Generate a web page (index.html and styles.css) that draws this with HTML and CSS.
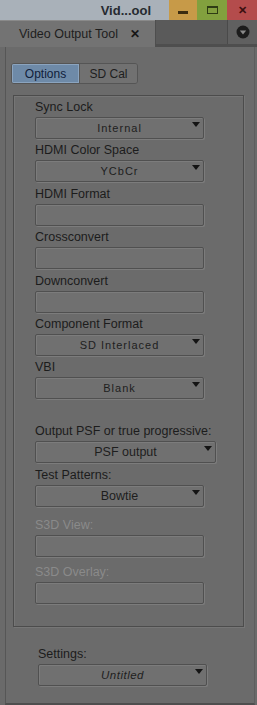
FILE: index.html
```html
<!DOCTYPE html>
<html>
	<head>
		<title>Video Output Tool</title>
		<link rel="stylesheet" href="styles.css">
	</head>
	<body>
		<div class="titlebar">
			<div class="title">Vid...ool</div>
			<div class="win-btn btn-min"><span class="min-bar"></span></div>
			<div class="win-btn btn-max"><span class="max-box"></span></div>
			<div class="win-btn btn-close">&#x2715;</div>
		</div>

		<div class="tabbar">
			<div class="tab">
				<span>Video Output Tool</span>
				<span class="tab-close">&#x2715;</span>
			</div>
			<div class="tab-fill"></div>
			<div class="tab-menu">
				<svg width="14" height="14" viewBox="0 0 14 14">
					<circle cx="7" cy="7" r="6.5" fill="#1c1c1c" />
					<path d="M3.8 5.6 L10.2 5.6 L7 9.4 Z" fill="#8a8a8a" />
				</svg>
			</div>
		</div>

		<div class="panel">
			<div class="segmented">
				<div class="seg seg-active">Options</div>
				<div class="seg">SD Cal</div>
			</div>

			<div class="group">
				<div class="field">
					<div class="field-label">Sync Lock</div>
					<div class="select mono">Internal<span class="arrow"></span></div>
				</div>
				<div class="field">
					<div class="field-label">HDMI Color Space</div>
					<div class="select mono">YCbCr<span class="arrow"></span></div>
				</div>
				<div class="field">
					<div class="field-label">HDMI Format</div>
					<div class="select"></div>
				</div>
				<div class="field">
					<div class="field-label">Crossconvert</div>
					<div class="select"></div>
				</div>
				<div class="field">
					<div class="field-label">Downconvert</div>
					<div class="select"></div>
				</div>
				<div class="field">
					<div class="field-label">Component Format</div>
					<div class="select mono">SD Interlaced<span class="arrow"></span></div>
				</div>
				<div class="field">
					<div class="field-label">VBI</div>
					<div class="select mono">Blank<span class="arrow"></span></div>
				</div>

				<div class="field field-gap">
					<div class="field-label">Output PSF or true progressive:</div>
					<div class="select select-wide">PSF output<span class="arrow"></span></div>
				</div>
				<div class="field">
					<div class="field-label">Test Patterns:</div>
					<div class="select">Bowtie<span class="arrow"></span></div>
				</div>
				<div class="field disabled s3d-view">
					<div class="field-label">S3D View:</div>
					<div class="select"></div>
				</div>
				<div class="field disabled">
					<div class="field-label">S3D Overlay:</div>
					<div class="select"></div>
				</div>
			</div>

			<div class="settings">
				<div class="field-label">Settings:</div>
				<div class="select select-italic">Untitled<span class="arrow"></span></div>
			</div>
		</div>
	</body>
</html>
```

FILE: styles.css
```css
* {
	margin: 0;
	padding: 0;
	box-sizing: border-box;
}

body {
	font-family: "Liberation Sans", Arial, sans-serif;
	background: #6a6a6a;
	color: #1c1c1c;
	width: 257px;
	height: 705px;
	overflow: hidden;
}

/* Window title bar */
.titlebar {
	display: flex;
	height: 20px;
}

.title {
	flex: 1;
	background: #a9b1b9;
	color: #262a30;
	font-weight: bold;
	font-size: 13px;
	text-align: right;
	padding: 3px 18px 0 0;
}

.win-btn {
	width: 29px;
	display: flex;
	align-items: center;
	justify-content: center;
}

.btn-min {
	width: 28px;
	background: #c79a48;
}

.min-bar {
	width: 10px;
	height: 3px;
	margin-top: 5px;
	background: #3c2c10;
}

.btn-max {
	width: 30px;
	background: #82a03e;
}

.max-box {
	width: 11px;
	height: 8px;
	border: 1px solid #2e3c14;
	border-top-width: 2px;
}

.btn-close {
	width: 30px;
	background: #b44c4c;
	color: #3a1010;
	font-size: 11px;
	font-weight: bold;
}

/* Tab strip */
.tabbar {
	display: flex;
	height: 27px;
	background: #4e4e4e;
}

.tab {
	width: 155px;
	background: #737373;
	border-top: 1px solid #8a8a8a;
	display: flex;
	align-items: center;
	gap: 12px;
	padding-left: 19px;
	font-size: 12.5px;
	color: #1e1e1e;
}

.tab-close {
	font-size: 12px;
	font-weight: bold;
	color: #161616;
}

.tab-fill {
	flex: 1;
	background: #5a5a5a;
	margin: 0 0 3px 1px;
}

.tab-menu {
	width: 30px;
	background: #606060;
	border-left: 1px solid #4a4a4a;
	margin-bottom: 3px;
	display: flex;
	align-items: center;
	justify-content: center;
}

/* Main panel */
.panel {
	height: 658px;
	margin-left: 5px;
	margin-right: 2px;
	border-left: 1px solid #565656;
	border-right: 1px solid #5e5e5e;
	border-bottom: 2px solid #4e4e4e;
	background: #6b6b6b;
	padding: 16px 0 0 5px;
}

.segmented {
	display: flex;
	width: 127px;
	height: 21px;
	border: 1px solid #555;
	border-radius: 3px;
	overflow: hidden;
	font-size: 12px;
}

.seg {
	flex: 1;
	display: flex;
	align-items: center;
	justify-content: center;
	background: #717171;
	color: #1e1e1e;
	border-left: 1px solid #575757;
}

.seg-active {
	flex: 0 0 67px;
	background: #6e8aa8;
	color: #10203a;
	border-left: none;
	box-shadow: inset 0 0 0 1px #8ba4bf;
}

.group {
	margin: 11px 0 0 2px;
	width: 231px;
	height: 532px;
	border: 1px solid #4c4c4c;
	box-shadow: inset 1px 1px 0 #767676, 1px 1px 0 #767676;
	padding: 4px 0 0 21px;
}

.field-label {
	font-size: 12.5px;
	height: 17px;
	line-height: 14px;
	color: #1c1c1c;
}

.select {
	position: relative;
	width: 169px;
	height: 22px;
	margin-bottom: 4.4px;
	background: #707070;
	border: 1px solid #505050;
	border-radius: 2px;
	box-shadow: inset 1px 1px 0 #7c7c7c, 1px 1px 0 #7c7c7c;
	font-size: 12.5px;
	line-height: 20px;
	text-align: center;
	color: #1e1e1e;
}

.mono {
	font-size: 11px;
	letter-spacing: 1px;
}

.select-wide {
	width: 181px;
}

.select-italic {
	font-style: italic;
	font-size: 11.5px;
	letter-spacing: 0.5px;
}

.arrow {
	position: absolute;
	top: 4px;
	right: 3px;
	width: 0;
	height: 0;
	border-left: 4px solid transparent;
	border-right: 4px solid transparent;
	border-top: 5px solid #141414;
}

.field-gap {
	margin-top: 25px;
}

.disabled .field-label {
	color: #8a8a8a;
}

.s3d-view {
	margin-top: 11px;
}

.s3d-view .select {
	margin-bottom: 8px;
}

.settings {
	margin: 20px 0 0 27px;
}
```
